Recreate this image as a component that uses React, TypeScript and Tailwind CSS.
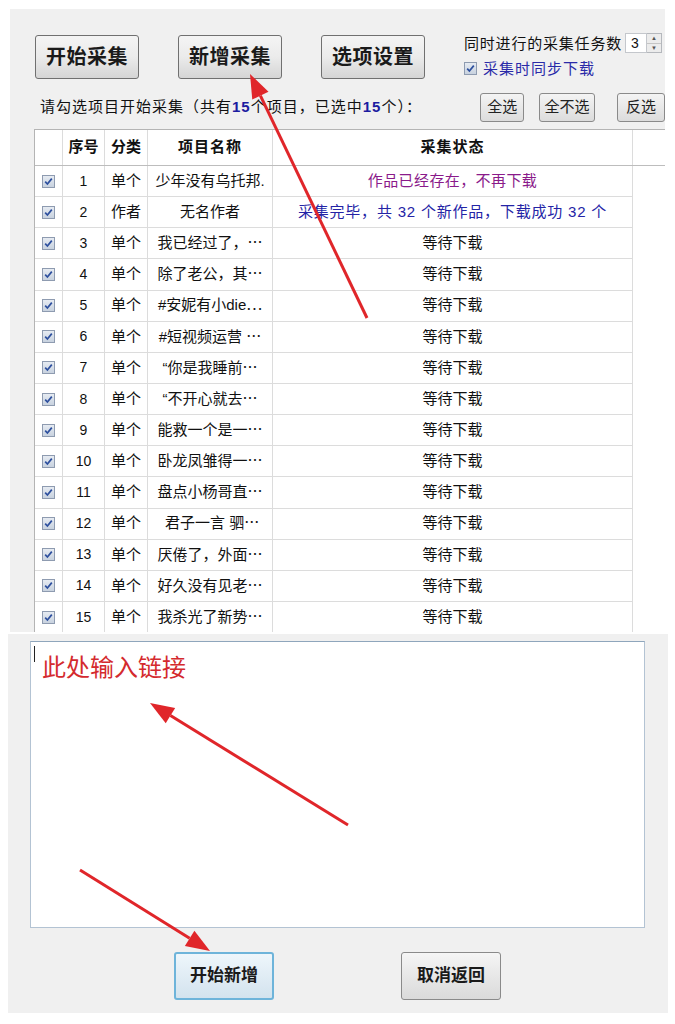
import type { ReactElement } from "react";

type Row = {
  kind: string;
  name: string;
  status: string;
  tone?: "purple" | "blue";
};

const ROWS: Row[] = [
  { kind: "单个", name: "少年没有乌托邦.", status: "作品已经存在，不再下载", tone: "purple" },
  { kind: "作者", name: "无名作者", status: "采集完毕，共 32 个新作品，下载成功 32 个", tone: "blue" },
  { kind: "单个", name: "我已经过了，⋯", status: "等待下载" },
  { kind: "单个", name: "除了老公，其⋯", status: "等待下载" },
  { kind: "单个", name: "#安妮有小die⋯", status: "等待下载" },
  { kind: "单个", name: "#短视频运营 ⋯", status: "等待下载" },
  { kind: "单个", name: "“你是我睡前⋯", status: "等待下载" },
  { kind: "单个", name: "“不开心就去⋯", status: "等待下载" },
  { kind: "单个", name: "能救一个是一⋯", status: "等待下载" },
  { kind: "单个", name: "卧龙凤雏得一⋯", status: "等待下载" },
  { kind: "单个", name: "盘点小杨哥直⋯", status: "等待下载" },
  { kind: "单个", name: "\u00a0君子一言 驷⋯", status: "等待下载" },
  { kind: "单个", name: "厌倦了，外面⋯", status: "等待下载" },
  { kind: "单个", name: "好久没有见老⋯", status: "等待下载" },
  { kind: "单个", name: "我杀光了新势⋯", status: "等待下载" },
];

function Check(): ReactElement {
  return (
    <span className="flex h-[13px] w-[13px] items-center justify-center border border-[#8e9bb0] bg-linear-to-b from-[#e6ebf2] to-[#c8d2df]">
      <svg width="11" height="11" viewBox="0 0 11 11">
        <path d="M2.2 5.6 L4.4 8 L8.8 2.6" fill="none" stroke="#2d4f9e" strokeWidth="1.7" />
      </svg>
    </span>
  );
}

function BigButton({ label }: { label: string }): ReactElement {
  return (
    <button
      type="button"
      className="flex h-[44px] w-[104px] items-center justify-center rounded-[3px] border border-[#707070] bg-linear-to-b from-[#f4f4f4] via-[#ebebeb] to-[#d5d5d5] text-[20px] font-bold tracking-[0.5px] text-[#1a1a1a]"
    >
      {label}
    </button>
  );
}

function SmallButton({ label, width }: { label: string; width: string }): ReactElement {
  return (
    <button
      type="button"
      className={`flex h-[29px] ${width} items-center justify-center rounded-[3px] border border-[#8a8a8a] bg-linear-to-b from-[#f4f4f4] to-[#dcdcdc] text-[15px] text-[#222]`}
    >
      {label}
    </button>
  );
}

function Arrow({ x1, y1, x2, y2 }: { x1: number; y1: number; x2: number; y2: number }): ReactElement {
  const len = Math.hypot(x2 - x1, y2 - y1);
  const ux = (x2 - x1) / len;
  const uy = (y2 - y1) / len;
  const bx = x2 - ux * 24;
  const by = y2 - uy * 24;
  const nx = -uy * 9;
  const ny = ux * 9;
  return (
    <g>
      <line x1={x1} y1={y1} x2={bx} y2={by} stroke="#e0262a" strokeWidth="3" />
      <polygon points={`${x2},${y2} ${bx + nx},${by + ny} ${bx - nx},${by - ny}`} fill="#e0262a" />
    </g>
  );
}

export default function App(): ReactElement {
  return (
    <div className="relative h-[1024px] w-[675px] overflow-hidden bg-white text-[15px] text-[#111] [font-family:'Liberation_Sans','Noto_Sans_CJK_SC',sans-serif]">
      {/* 上半：采集列表 */}
      <div className="ml-[10px] mt-[9px] h-[623px] w-[655px] overflow-hidden bg-[#f0f0f0]">
        <div className="flex pl-[25px] pt-[26px]">
          <BigButton label="开始采集" />
          <div className="ml-[39px]">
            <BigButton label="新增采集" />
          </div>
          <div className="ml-[39px]">
            <BigButton label="选项设置" />
          </div>
          <div className="ml-[39px] flex flex-col">
            <div className="-mt-[2px] flex h-[20px] items-center">
              <span className="text-[15px] leading-none tracking-[0.8px]">同时进行的采集任务数</span>
              <div className="ml-[3px] flex h-[20px] w-[22px] items-center border border-[#c4c7cc] bg-white pl-[5px] text-[14px]">3</div>
              <div className="flex h-[20px] w-[15px] flex-col border border-l-0 border-[#b5b8bd] bg-[#ececec]">
                <span className="flex flex-1 items-center justify-center text-[6px] leading-none text-[#555]">▲</span>
                <span className="flex flex-1 items-center justify-center border-t border-[#c5c5c5] text-[6px] leading-none text-[#555]">▼</span>
              </div>
            </div>
            <div className="mt-[8px] flex items-center gap-[6px]">
              <Check />
              <span className="text-[15px] leading-none tracking-[1px] text-[#2a2aa8]">采集时同步下载</span>
            </div>
          </div>
        </div>

        <div className="mt-[14px] flex items-center">
          <div className="w-[473px] pl-[30px] text-[15px] tracking-[1px]">
            请勾选项目开始采集（共有<b className="text-[#1c1ca0]">15</b>个项目，已选中<b className="text-[#1c1ca0]">15</b>个）：
          </div>
          <SmallButton label="全选" width="w-[44px]" />
          <div className="ml-[15px]">
            <SmallButton label="全不选" width="w-[56px]" />
          </div>
          <div className="ml-[22px]">
            <SmallButton label="反选" width="w-[48px]" />
          </div>
        </div>

        <div className="ml-[24px] mt-[7px] w-[640px] border-l border-t border-[#b4b4b4] bg-white">
          <div className="flex h-[36px] border-b border-[#bdbdbd] font-bold">
            <div className="w-[28px] border-r border-[#dcdcdc]" />
            <div className="flex w-[42px] items-center justify-center border-r border-[#dcdcdc]">序号</div>
            <div className="flex w-[43px] items-center justify-center border-r border-[#dcdcdc]">分类</div>
            <div className="flex w-[125px] items-center justify-center border-r border-[#dcdcdc] tracking-[1px]">项目名称</div>
            <div className="flex w-[360px] items-center justify-center border-r border-[#dcdcdc] tracking-[1px]">采集状态</div>
            <div className="flex-1" />
          </div>
          {ROWS.map((row, i) => (
            <div key={i} className="flex h-[31.15px]">
              <div className="flex w-[28px] items-center justify-center border-b border-r border-[#dcdcdc]">
                <Check />
              </div>
              <div className="flex w-[42px] items-center justify-center border-b border-r border-[#dcdcdc] text-[14px]">{i + 1}</div>
              <div className="flex w-[43px] items-center justify-center border-b border-r border-[#dcdcdc]">{row.kind}</div>
              <div className="flex w-[125px] items-center justify-center overflow-hidden whitespace-pre border-b border-r border-[#dcdcdc]">{row.name}</div>
              <div
                className={
                  row.tone === "purple"
                    ? "flex w-[360px] items-center justify-center whitespace-pre border-b border-r border-[#dcdcdc] tracking-[0.4px] text-[#8a1a8a]"
                    : row.tone === "blue"
                      ? "flex w-[360px] items-center justify-center whitespace-pre border-b border-r border-[#dcdcdc] tracking-[0.8px] text-[#2424a6]"
                      : "flex w-[360px] items-center justify-center whitespace-pre border-b border-r border-[#dcdcdc]"
                }
              >
                {row.status}
              </div>
              <div className="flex-1" />
            </div>
          ))}
        </div>
      </div>

      {/* 下半：输入链接 */}
      <div className="ml-[8px] mt-[2px] h-[379px] w-[660px] bg-[#f0f0f0] pl-[22px] pt-[7px]">
        <div className="relative h-[287px] w-[615px] border border-[#b3c3d3] border-t-[#8fa6bc] bg-white">
          <span className="absolute left-[3px] top-[4px] h-[16px] w-px bg-[#222]" />
          <div className="pl-[11px] pt-[11px] text-[24px] leading-[30px] text-[#d42a2e]">此处输入链接</div>
        </div>
        <div className="mt-[24px] flex pl-[144px]">
          <button
            type="button"
            className="flex h-[48px] w-[100px] items-center justify-center rounded-[3px] border-2 border-[#6eb4da] bg-linear-to-b from-[#eef6fb] to-[#d3e3ee] text-[17px] font-bold text-[#1a1a1a]"
          >
            开始新增
          </button>
          <button
            type="button"
            className="ml-[127px] flex h-[48px] w-[100px] items-center justify-center rounded-[3px] border border-[#8a8a8a] bg-linear-to-b from-[#f5f5f5] to-[#dadada] text-[17px] font-bold text-[#1a1a1a]"
          >
            取消返回
          </button>
        </div>
      </div>

      {/* 标注箭头 */}
      <svg className="pointer-events-none absolute left-0 top-0" width="675" height="1024">
        <Arrow x1={367} y1={318} x2={250} y2={74} />
        <Arrow x1={348} y1={825} x2={150} y2={703} />
        <Arrow x1={80} y1={870} x2={210} y2={951} />
      </svg>
    </div>
  );
}
